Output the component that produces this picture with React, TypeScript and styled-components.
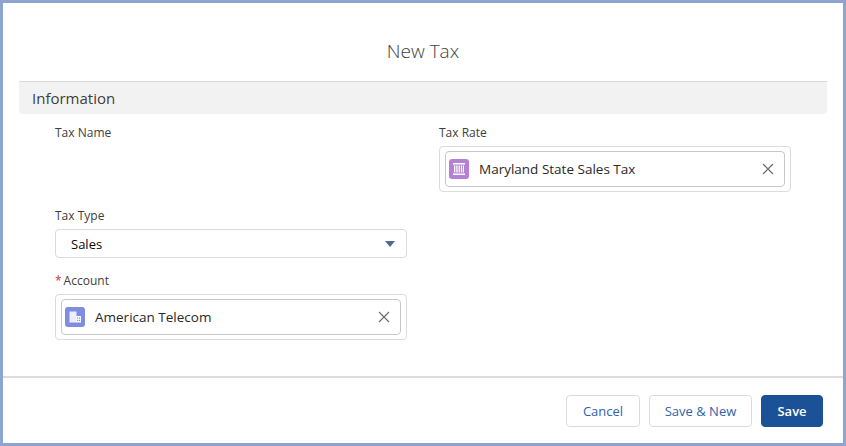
import React from "react";
import styled, { createGlobalStyle } from "styled-components";

const Global = createGlobalStyle`
  html, body { margin: 0; padding: 0; }
  body { font-family: "Open Sans", "Liberation Sans", sans-serif; color: #080707; }
  * { box-sizing: border-box; }
`;

const Frame = styled.div`
  width: 846px; height: 446px; border: 3px solid #8ea3cf; background: #fff;
  display: flex; flex-direction: column;
`;
const Header = styled.div`
  height: 79px; display: flex; align-items: center; justify-content: center;
  border-bottom: 1px solid #dddbda; margin: 0 16px; padding-top: 18px;
  font-size: 19px; font-weight: 300; color: #3e3e3c;
`;
const Body = styled.div`flex: 1; padding: 0 16px;`;
const SectionBar = styled.div`
  height: 32px; background: #f3f2f2; border-radius: 0 0 4px 4px;
  display: flex; align-items: center; padding-left: 13px;
  font-size: 15px; color: #3e3e3c;
`;
const Grid = styled.div`
  display: grid; grid-template-columns: 352px 352px; column-gap: 32px;
  padding: 7px 0 0 36px;
`;
const Field = styled.div<{ $h: number }>`height: ${p => p.$h}px;`;
const Label = styled.div`
  font-size: 12px; color: #3e3e3c; height: 22px; display: flex; align-items: center;
`;
const Req = styled.span`color: #c23934; margin-right: 2px;`;
const Outer = styled.div`
  border: 1px solid #dddbda; border-radius: 4px; padding: 4px 5px; height: 46px;
  margin-top: 3px;
`;
const Pill = styled.div`
  height: 36px; border: 1px solid #c9c7c5; border-radius: 4px;
  display: flex; align-items: center; padding: 0 10px 0 3px; gap: 10px;
  font-size: 13.5px; color: #2b2826;
`;
const Icon = styled.div<{ $bg: string }>`
  width: 20px; height: 20px; border-radius: 3px; background: ${p => p.$bg};
  display: flex; align-items: center; justify-content: center;
`;
const Name = styled.span`flex: 1;`;
const Select = styled.div`
  height: 29px; border: 1px solid #dddbda; border-radius: 4px; margin-top: 3px;
  display: flex; align-items: center; justify-content: space-between;
  padding: 0 11px 0 15px; font-size: 13px;
`;
const Footer = styled.div`
  border-top: 2px solid #dddbda; height: 67px; display: flex; align-items: center;
  justify-content: flex-end; gap: 9px; padding: 0 20px 0 0; margin-top: auto;
`;
const Btn = styled.button<{ $brand?: boolean; $w: number }>`
  width: ${p => p.$w}px; height: 32px; border-radius: 4px; font-family: inherit; font-size: 13px;
  border: 1px solid ${p => (p.$brand ? "#1b5297" : "#dddbda")};
  background: ${p => (p.$brand ? "#1b5297" : "#fff")};
  color: ${p => (p.$brand ? "#fff" : "#2f64a8")};
  font-weight: ${p => (p.$brand ? 600 : 400)};
`;

const X = () => (
  <svg width="12" height="12" viewBox="0 0 12 12"><path d="M1 1L11 11M11 1L1 11" stroke="#706e6b" strokeWidth="1.2" /></svg>
);

export default function App() {
  return (
    <>
      <Global />
      <Frame>
        <Header>New Tax</Header>
        <Body>
          <SectionBar>Information</SectionBar>
          <Grid>
            <Field $h={83}><Label>Tax Name</Label></Field>
            <Field $h={83}>
              <Label>Tax Rate</Label>
              <Outer>
                <Pill>
                  <Icon $bg="#b781d3">
                    <svg width="14" height="14" viewBox="0 0 14 14" fill="#fff">
                      <rect x="1" y="1" width="12" height="1.5" />
                      <rect x="2" y="3.5" width="1.3" height="7" /><rect x="4.3" y="3.5" width="1.3" height="7" />
                      <rect x="6.6" y="3.5" width="1.3" height="7" /><rect x="8.9" y="3.5" width="1.3" height="7" />
                      <rect x="11" y="3.5" width="1" height="7" />
                      <rect x="1" y="11.5" width="12" height="1.5" />
                    </svg>
                  </Icon>
                  <Name>Maryland State Sales Tax</Name>
                  <X />
                </Pill>
              </Outer>
            </Field>
            <Field $h={65}>
              <Label>Tax Type</Label>
              <Select>
                <span>Sales</span>
                <svg width="10" height="6" viewBox="0 0 10 6"><path d="M0 0H10L5 6Z" fill="#54698d" /></svg>
              </Select>
            </Field>
            <div />
            <Field $h={70}>
              <Label><Req>*</Req>Account</Label>
              <Outer>
                <Pill>
                  <Icon $bg="#7f8de1">
                    <svg width="14" height="14" viewBox="0 0 14 14" fill="#fff">
                      <rect x="1.5" y="1.5" width="7" height="11" opacity="0.85" />
                      <rect x="8" y="6" width="5" height="6.5" />
                      <rect x="9" y="7.5" width="1.2" height="1.2" fill="#7f8de1" />
                      <rect x="11" y="7.5" width="1.2" height="1.2" fill="#7f8de1" />
                      <rect x="9" y="9.8" width="1.2" height="1.2" fill="#7f8de1" />
                      <rect x="11" y="9.8" width="1.2" height="1.2" fill="#7f8de1" />
                    </svg>
                  </Icon>
                  <Name>American Telecom</Name>
                  <X />
                </Pill>
              </Outer>
            </Field>
          </Grid>
        </Body>
        <Footer>
          <Btn $w={74}>Cancel</Btn>
          <Btn $w={103}>Save &amp; New</Btn>
          <Btn $w={62} $brand>Save</Btn>
        </Footer>
      </Frame>
    </>
  );
}
